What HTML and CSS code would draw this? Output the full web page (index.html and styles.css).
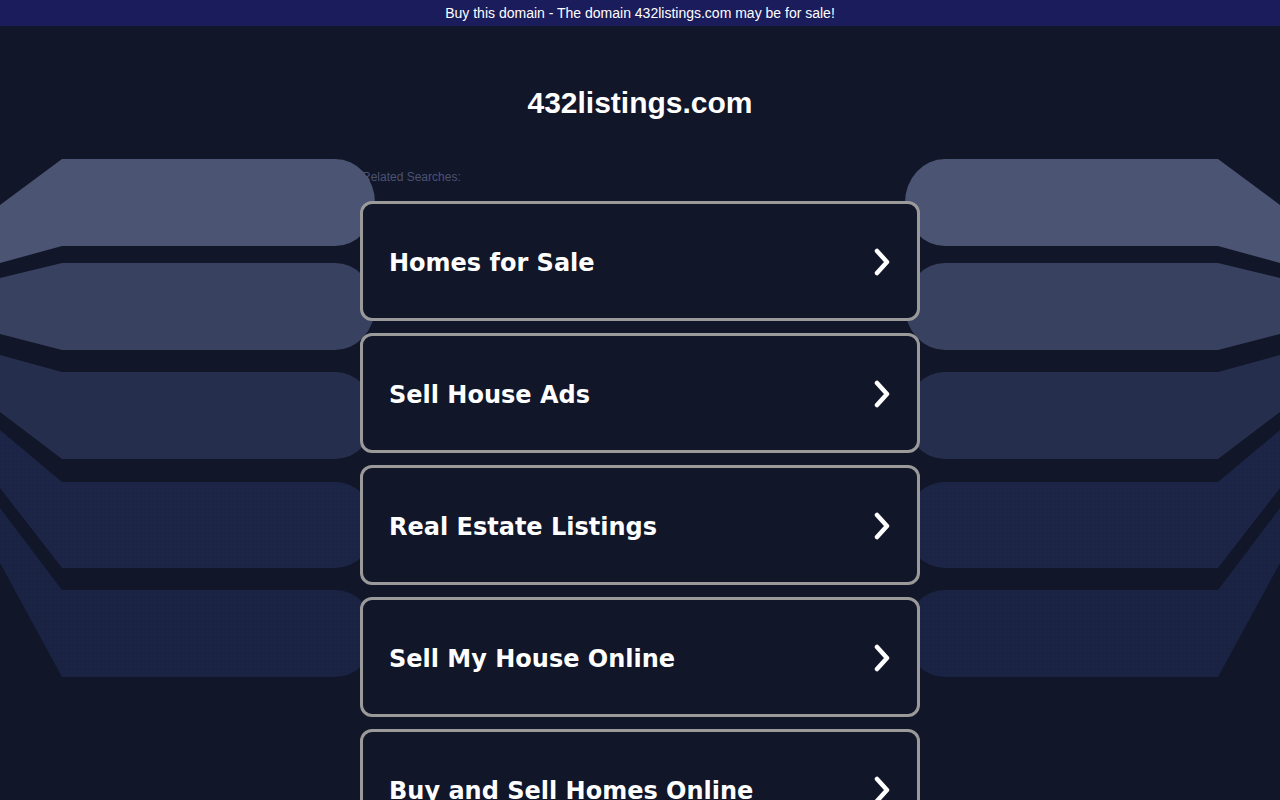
FILE: index.html
```html
<!DOCTYPE html>
<html lang="en-US">
	<head>
		<title>432listings.com</title>
		<link rel="stylesheet" href="styles.css">
	</head>
	<body>
		<div class="banner">Buy this domain - The domain 432listings.com may be for sale!</div>

		<svg class="backdrop" width="1280" height="800" viewBox="0 0 1280 800" aria-hidden="true">
			<defs>
				<pattern id="dots" width="4" height="4" patternUnits="userSpaceOnUse">
					<circle cx="1" cy="1" r="0.6" fill="#141a35"></circle>
					<circle cx="3" cy="3" r="0.6" fill="#232c52"></circle>
				</pattern>
				<g id="fan">
					<path fill="#4b5573" d="M0,205 L62,159 L335,159 A40,43.5 0 0 1 335,246 L62,246 L0,263 Z"></path>
					<path fill="#394160" d="M0,278 L62,263 L335,263 A40,43.5 0 0 1 335,350 L62,350 L0,334 Z"></path>
					<path fill="#262e4d" d="M0,355 L62,372 L335,372 A40,43.5 0 0 1 335,459 L62,459 L0,412 Z"></path>
					<path fill="#1c2546" d="M0,430 L62,482 L335,482 A40,43 0 0 1 335,568 L62,568 L0,488 Z"></path>
					<path fill="url(#dots)" opacity="0.5" d="M0,430 L62,482 L335,482 A40,43 0 0 1 335,568 L62,568 L0,488 Z"></path>
					<path fill="#1a2343" d="M0,508 L62,590 L335,590 A40,43.5 0 0 1 335,677 L62,677 L0,563 Z"></path>
					<path fill="url(#dots)" opacity="0.5" d="M0,508 L62,590 L335,590 A40,43.5 0 0 1 335,677 L62,677 L0,563 Z"></path>
				</g>
			</defs>
			<use href="#fan"></use>
			<use href="#fan" transform="translate(1280 0) scale(-1 1)"></use>
		</svg>

		<div class="content">
			<h1 class="domain">432listings.com</h1>
			<p class="related">Related Searches:</p>

			<div class="search-list">
				<a class="search-card" href="#">
					<span>Homes for Sale</span>
					<svg class="chevron" width="18" height="28" viewBox="0 0 18 28"><polyline points="4,3 14,14 4,25"></polyline></svg>
				</a>
				<a class="search-card" href="#">
					<span>Sell House Ads</span>
					<svg class="chevron" width="18" height="28" viewBox="0 0 18 28"><polyline points="4,3 14,14 4,25"></polyline></svg>
				</a>
				<a class="search-card" href="#">
					<span>Real Estate Listings</span>
					<svg class="chevron" width="18" height="28" viewBox="0 0 18 28"><polyline points="4,3 14,14 4,25"></polyline></svg>
				</a>
				<a class="search-card" href="#">
					<span>Sell My House Online</span>
					<svg class="chevron" width="18" height="28" viewBox="0 0 18 28"><polyline points="4,3 14,14 4,25"></polyline></svg>
				</a>
				<a class="search-card" href="#">
					<span>Buy and Sell Homes Online</span>
					<svg class="chevron" width="18" height="28" viewBox="0 0 18 28"><polyline points="4,3 14,14 4,25"></polyline></svg>
				</a>
			</div>
		</div>
	</body>
</html>
```

FILE: styles.css
```css
* {
	font-family: "Liberation Sans", Arial, sans-serif;
}
body {
	margin: 0;
	background: #111629;
	color: white;
	overflow: hidden;
}

.banner {
	height: 26px;
	line-height: 26px;
	background: #1a1c5b;
	font-size: 14px;
	text-align: center;
}

.backdrop {
	position: absolute;
	left: 0;
	top: 0;
	z-index: 0;
}

.content {
	width: 560px;
	margin: 0 auto;
}

.domain {
	position: relative;
	z-index: 1;
	margin: 60px 0 0;
	font-size: 30px;
	line-height: 34px;
	text-align: center;
}

.related {
	margin: 50px 0 17px 2px;
	font-size: 12px;
	line-height: 14px;
	color: #4b5373;
}

.search-list {
	display: flex;
	flex-direction: column;
	gap: 12px;
}
.search-card {
	position: relative;
	z-index: 1;
	height: 112px;
	box-sizing: content-box;
	border: 3px solid #9a9a9a;
	border-radius: 12px;
	background: #111629;
	padding: 2px 26px 0 26px;
	display: flex;
	align-items: center;
	justify-content: space-between;
	color: white;
	text-decoration: none;
}
.search-card > span {
	padding-top: 2px;
	font-family: "DejaVu Sans", Verdana, sans-serif;
	font-weight: bold;
	font-size: 24px;
}
.chevron polyline {
	fill: none;
	stroke: white;
	stroke-width: 4.5;
	stroke-linecap: round;
	stroke-linejoin: round;
}
```
